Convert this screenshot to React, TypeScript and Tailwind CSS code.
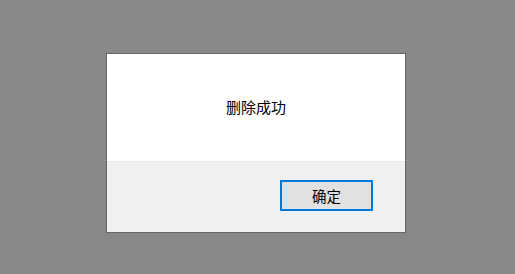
export default function App() {
  return (
    <div
      className="w-full h-[274px] bg-[#888888] pl-[106px] pt-[53px]"
      style={{ fontFamily: '"Microsoft YaHei", "Noto Sans CJK SC", sans-serif' }}
    >
      <div className="w-[300px] h-[180px] border border-[#666666] flex flex-col bg-white">
        <div className="h-[107px] flex items-center justify-center text-[15px] text-black">
          删除成功
        </div>
        <div className="flex-1 bg-[#f0f0f0] border-t border-[#e8e8e8] flex justify-end items-start pt-[18px] pr-[32px]">
          <button className="w-[93px] h-[31px] border-2 border-[#0078d7] bg-[#e1e1e1] text-[14.5px] text-black flex items-center justify-center">
            确定
          </button>
        </div>
      </div>
    </div>
  );
}
